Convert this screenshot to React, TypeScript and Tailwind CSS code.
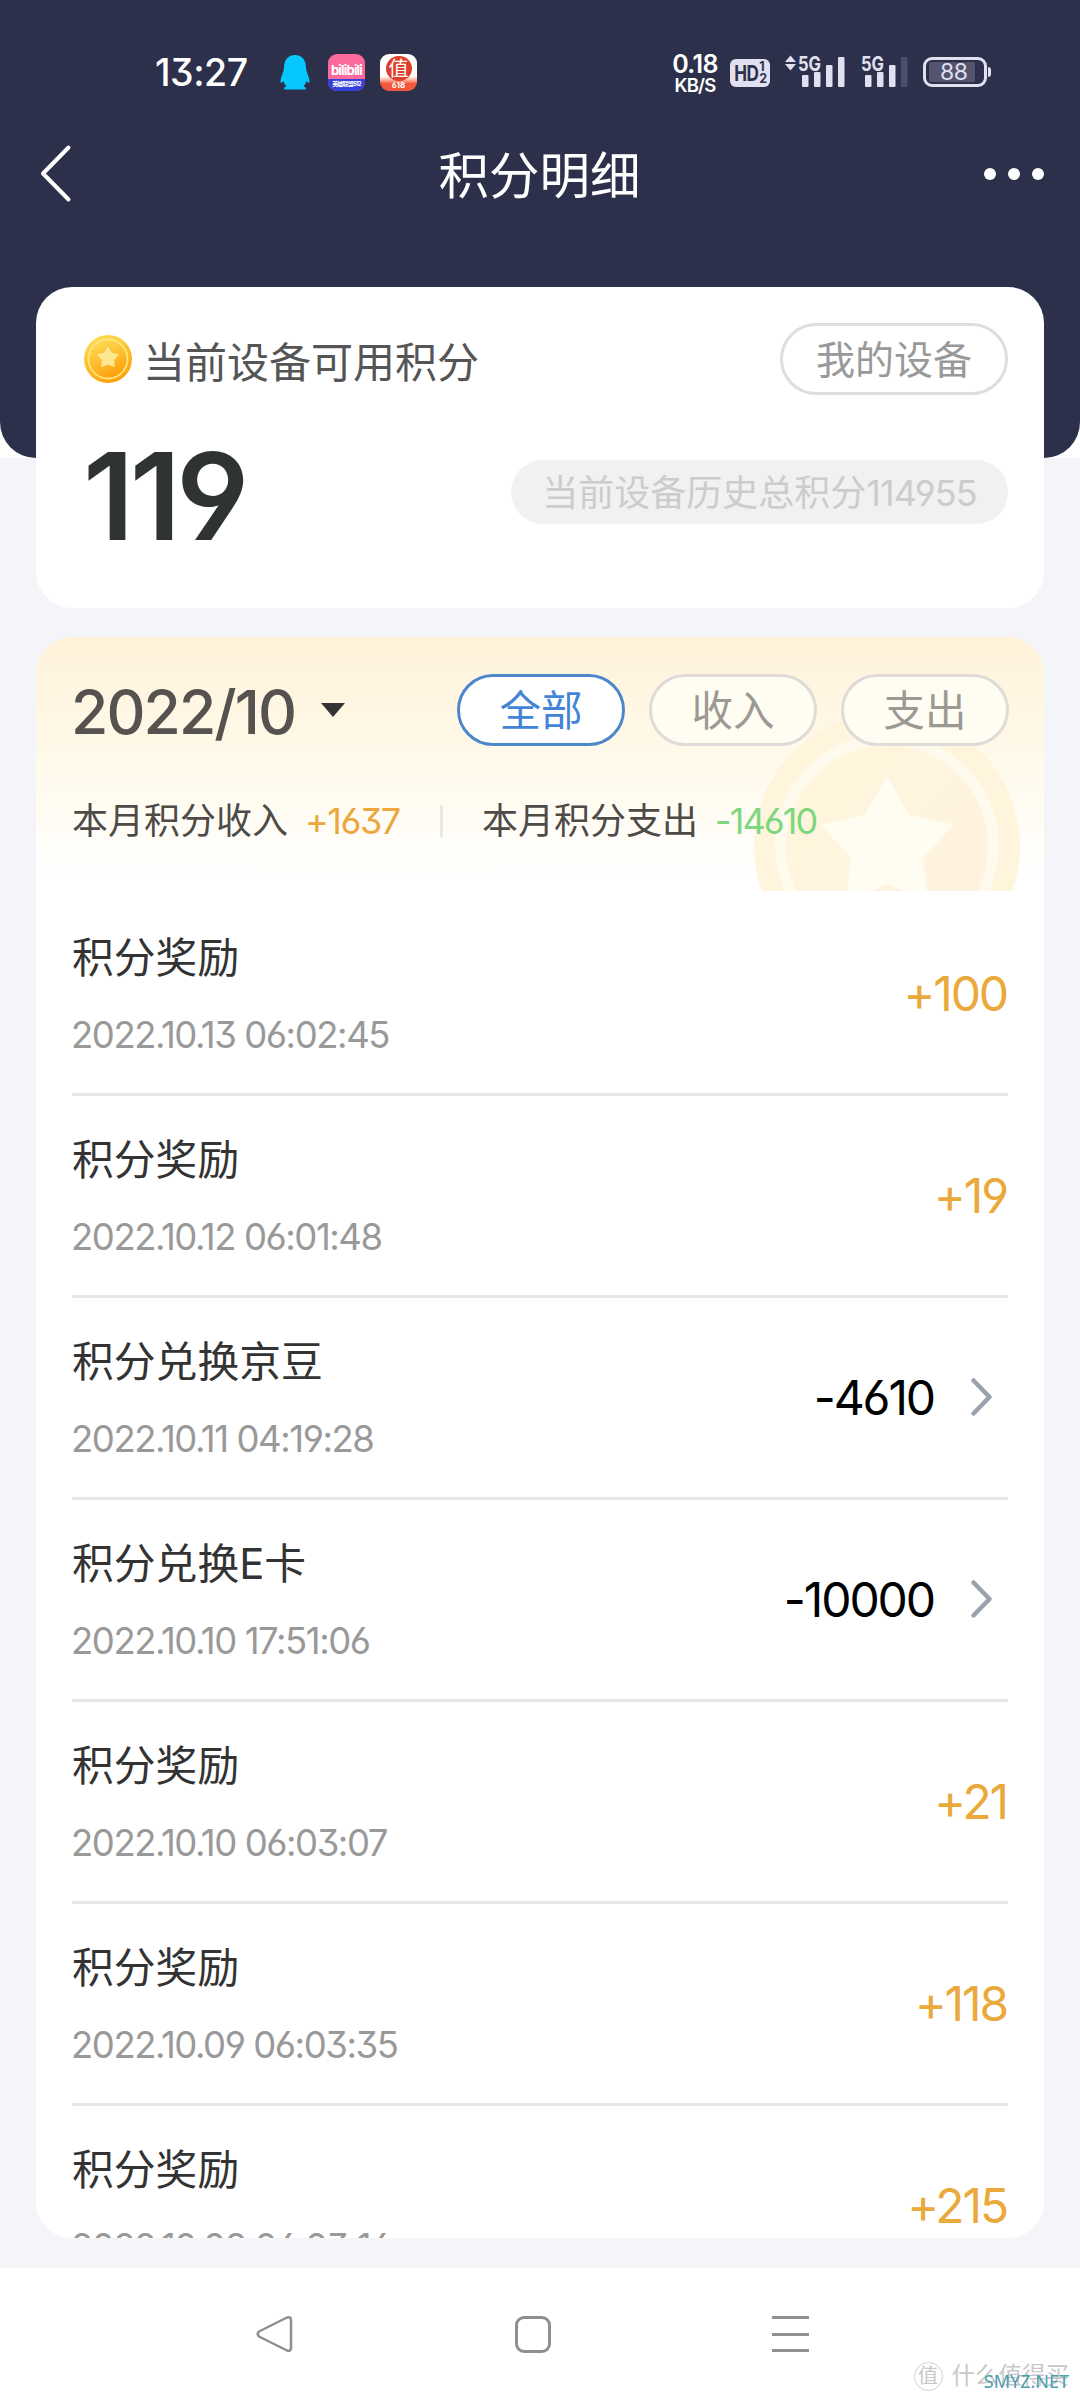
import React from "react";
import clsx from "clsx";

type PointRecord = {
  title: string;
  time: string;
  amount: string;
  link?: boolean;
};

const records: PointRecord[] = [
  { title: "积分奖励", time: "2022.10.13 06:02:45", amount: "+100" },
  { title: "积分奖励", time: "2022.10.12 06:01:48", amount: "+19" },
  { title: "积分兑换京豆", time: "2022.10.11 04:19:28", amount: "-4610", link: true },
  { title: "积分兑换E卡", time: "2022.10.10 17:51:06", amount: "-10000", link: true },
  { title: "积分奖励", time: "2022.10.10 06:03:07", amount: "+21" },
  { title: "积分奖励", time: "2022.10.09 06:03:35", amount: "+118" },
  { title: "积分奖励", time: "2022.10.08 06:03:16", amount: "+215" },
];

const tabs = ["全部", "收入", "支出"];

const starPath =
  "M0 -66 L21.2 -29.1 L62.8 -20.4 L34.2 11.1 L38.8 53.4 L0 36 L-38.8 53.4 L-34.2 11.1 L-62.8 -20.4 L-21.2 -29.1 Z";

const SignalBars: React.FC<{ weak?: boolean; data?: boolean }> = ({ weak, data }) => (
  <svg className="overflow-visible" width="62" height="34" viewBox="0 0 62 34" fill="#e0e0f0">
    {data && <path d="M6.5 0.5 L12 7 H1 Z M6.5 15.5 L12 9 H1 Z" />}
    <text
      x="14"
      y="15.5"
      fontSize="20.5"
      fontWeight="700"
      textLength="23"
      lengthAdjust="spacingAndGlyphs"
    >
      5G
    </text>
    <rect x="18" y="20" width="6.5" height="12" rx="1" />
    <rect x="30" y="17" width="6.5" height="15" rx="1" />
    <rect x="42" y="10" width="6.5" height="22" rx="1" />
    <rect x="54" y="2" width="6.5" height="30" rx="1" fill={weak ? "#4c4c6c" : "#e0e0f0"} />
  </svg>
);

const StatusBar = () => (
  <div className="flex h-[112px] items-start pt-[54px] pr-[89px] pl-[155px] text-white">
    <span className="w-[125px] text-[37.5px] leading-[38px] font-medium tracking-[-0.5px]">13:27</span>

    <svg width="30" height="36" viewBox="0 0 30 36" fill="#06c8ff">
      <path d="M15 1 C7.5 1 4 7 4 13.5 C4 18 1 22 0.5 26.5 C0.3 29.5 1.8 29.5 3.6 27 C4.2 29.5 5.2 31 6.6 32.2 C4 33 3.5 34.5 4.6 35.6 H25.4 C26.5 34.5 26 33 23.4 32.2 C24.8 31 25.8 29.5 26.4 27 C28.2 29.5 29.7 29.5 29.5 26.5 C29 22 26 18 26 13.5 C26 7 22.5 1 15 1 Z" />
    </svg>

    <div className="ml-[18px] flex h-[37px] w-[37px] flex-col items-center overflow-hidden rounded-[9px] bg-[#fb6a9d] font-bold">
      <span className="h-[25px] text-[13px] leading-[32px] tracking-[-0.8px]">bilibili</span>
      <span className="flex h-[12px] w-full justify-center bg-[#3440dc] text-[6px] leading-[10px] tracking-[-0.8px] whitespace-nowrap">
        英雄联盟S12
      </span>
    </div>

    <div className="ml-[15px] flex h-[37px] w-[37px] flex-col items-center overflow-hidden rounded-[9px] bg-linear-to-b from-white from-60% to-[#f0573c] to-80%">
      <span className="mt-[2px] flex h-[25px] w-[26px] shrink-0 items-center justify-center rounded-full bg-[#dd3f2b] text-[20px] leading-[24px]">
        值
      </span>
      <span className="text-[8px] leading-[9px] font-bold">618</span>
    </div>

    <div className="ml-auto flex h-[38px] w-[46px] flex-col items-center font-semibold">
      <span className="text-[25px] leading-[20px] tracking-[-0.6px]">0.18</span>
      <span className="mt-[3px] text-[18.5px] leading-[16px] tracking-[-0.8px]">KB/S</span>
    </div>

    <div className="mt-[5px] ml-[12px] flex h-[28px] w-[40px] items-center justify-center rounded-md bg-[#e0e0f0] font-bold text-[#2d304a]">
      <span className="-mx-[2px] scale-x-[0.78] text-[22px] leading-none tracking-[-1px]">HD</span>
      <span className="flex flex-col text-[12.5px] leading-[12px]">
        <span>1</span>
        <span>2</span>
      </span>
    </div>

    <div className="mt-px ml-[14px]">
      <SignalBars data />
    </div>
    <div className="mt-px ml-px">
      <SignalBars weak />
    </div>

    <div className="mt-[3px] ml-[14px] flex items-center">
      <div className="flex h-[30px] w-[64px] items-center rounded-[9px] border-3 border-[#e0e0f0] p-[3px]">
        <div className="h-[20px] w-[46px] rounded-[2px] bg-[#54546f] pl-[11px] text-[23px] leading-[21px] tracking-[-0.5px] text-[#e0e0f0]">
          88
        </div>
      </div>
      <div className="ml-px h-[10px] w-[3px] rounded-r bg-[#e0e0f0]" />
    </div>
  </div>
);

const TitleBar = () => (
  <div className="flex h-[123px] items-center justify-between pr-[36px] pl-[38px] text-white">
    <svg
      width="60"
      height="60"
      viewBox="0 0 60 60"
      fill="none"
      stroke="currentColor"
      strokeWidth="4"
      strokeLinecap="round"
      strokeLinejoin="round"
    >
      <path d="M30.500 3.500 L5 29.500 L30.500 55.500" />
    </svg>
    <h1 className="mt-[6px] mr-[3px] text-[50.5px] leading-none">积分明细</h1>
    <div className="flex w-[60px] justify-between">
      <span className="h-3 w-3 rounded-full bg-white" />
      <span className="h-3 w-3 rounded-full bg-white" />
      <span className="h-3 w-3 rounded-full bg-white" />
    </div>
  </div>
);

const Coin = () => (
  <svg width="50" height="50" viewBox="0 0 50 50">
    <defs>
      <linearGradient id="coin" x1="0.3" y1="0" x2="0.7" y2="1">
        <stop offset="0" stopColor="#fddc55" />
        <stop offset="1" stopColor="#ff9c08" />
      </linearGradient>
    </defs>
    <circle cx="25" cy="25" r="24" fill="url(#coin)" />
    <circle cx="25" cy="25" r="19.5" fill="url(#coin)" stroke="#ffe678" strokeWidth="1.8" />
    <path
      d={starPath}
      transform="translate(25 24) scale(0.155)"
      fill="#ffe793"
      stroke="#ffe793"
      strokeWidth="10"
      strokeLinejoin="round"
    />
  </svg>
);

const BalanceCard = () => (
  <section className="h-[321px] rounded-[36px] bg-white pt-9 pr-9 pl-[47px]">
    <div className="flex h-[72px] items-center">
      <Coin />
      <span className="mt-[7px] ml-[10px] text-[42px] leading-none text-[#555]">
        当前设备可用积分
      </span>
      <button className="ml-auto h-[72px] w-[228px] rounded-full border-3 border-[#dedede] text-[39px] leading-none text-[#999]">
        我的设备
      </button>
    </div>
    <div className="mt-[49px] flex items-center justify-between">
      <span className="text-[121px] leading-[104px] font-[570] tracking-[-4.5px] text-[#2f3433]">
        119
      </span>
      <span className="-mt-[8px] flex h-[64px] w-[497px] items-center justify-center rounded-full bg-[#f1f1f1] pt-[2px] text-[36px] text-[#ccc]">
        <span>当前设备历史总积分</span>
        <span className="tracking-[-0.9px]">114955</span>
      </span>
    </div>
  </section>
);

const CoinWatermark = () => (
  <svg
    className="absolute right-[22px] bottom-[3px]"
    width="270"
    height="178"
    viewBox="-135 -133 270 178"
  >
    <defs>
      <linearGradient id="mark" x1="0" y1="0" x2="1" y2="1">
        <stop offset="0" stopColor="#fff7dc" />
        <stop offset="1" stopColor="#fff1e0" />
      </linearGradient>
    </defs>
    <circle r="133" fill="#fff4dc" />
    <circle r="106.500" fill="url(#mark)" stroke="#fffaee" strokeWidth="11" />
    <path d={starPath} fill="#fffcf2" stroke="#fffcf2" strokeWidth="4" strokeLinejoin="round" />
  </svg>
);

const ListHeader = () => (
  <div className="relative h-[257px] bg-linear-to-b from-[#fff2da] via-[#fffaeb] to-white to-95% pt-[37px] pr-[35px] pl-9">
    <CoinWatermark />
    <div className="relative flex h-[72px] items-center">
      <span className="-ml-px mt-[5px] text-[60.5px] leading-none font-medium tracking-[-1.9px] text-[#555250]">
        2022/10
      </span>
      <svg className="ml-[26px]" width="24" height="14" viewBox="0 0 24 14">
        <path d="M0 0 H24 L12 14 Z" fill="#333" />
      </svg>
      <div className="ml-auto flex gap-6">
        {tabs.map((tab, idx) => (
          <button
            key={tab}
            className={clsx(
              "h-[72px] w-[168px] rounded-full border-3 pt-[3px] text-[41.5px] leading-none",
              idx === 0
                ? "border-[#4c88c9] bg-white text-[#4285d6]"
                : "border-[#dedbd8] bg-[#fffcf2] text-[#9c9892]"
            )}
          >
            {tab}
          </button>
        ))}
      </div>
    </div>
    <div className="relative mt-[50px] flex items-center text-[36px] leading-[50px] text-[#4d4a47]">
      <span className="w-[216px] shrink-0">本月积分收入</span>
      <span className="ml-[17px] w-[98px] tracking-[-1.5px] text-[#eda63a]">+1637</span>
      <span className="ml-[37px] h-[32px] w-[3px] bg-[#e8e8e8]" />
      <span className="ml-[39px]">本月积分支出</span>
      <span className="ml-[17px] tracking-[-1.9px] text-[#80d67f]">-14610</span>
    </div>
  </div>
);

const RecordRow: React.FC<{ record: PointRecord }> = ({ record }) => (
  <li className="mx-9 flex h-[202px] shrink-0 items-center border-b-3 border-[#e6e6e6]">
    <div className="flex h-full flex-col pt-[39px]">
      <span className="text-[41.8px] leading-[50px] text-[#333]">{record.title}</span>
      <span className="-ml-px mt-[29px] text-[36.5px] leading-[46px] font-[370] tracking-[-1.45px] text-[#999]">
        {record.time}
      </span>
    </div>
    <span
      className={clsx(
        "mt-px mr-px ml-auto text-[48px] leading-none font-[370] tracking-[-2.1px]",
        record.link ? "text-black" : "text-[#eaa93b]"
      )}
    >
      {record.amount}
    </span>
    {record.link && (
      <svg
        className="mr-[13px] ml-[34px]"
        width="26"
        height="42"
        viewBox="0 0 26 42"
        fill="none"
        stroke="#9aa2ae"
        strokeWidth="4.500"
        strokeLinecap="round"
        strokeLinejoin="round"
      >
        <path d="M4.500 3.500 L20.500 20 L4.500 36.500" />
      </svg>
    )}
  </li>
);

const NavBar = () => (
  <nav className="relative flex h-[132px] items-start bg-white pt-[47px]">
    <svg className="ml-[255px]" width="38" height="38" viewBox="0 0 38 38" fill="none" stroke="#8f8f8f" strokeWidth="2.500">
      <path d="M32 2.500 L4 16.500 Q1.500 19 4 21.500 L32 35.500 Q36 36.500 36 33 V5 Q36 1.500 32 2.500 Z" strokeLinejoin="round" />
    </svg>
    <span className="mt-px ml-[222px] h-[37px] w-[36px] rounded-[9px] border-3 border-[#8f8f8f]" />
    <div className="mt-px ml-[221px] flex h-[36px] w-[37px] flex-col justify-between">
      <span className="h-[3px] bg-[#8f8f8f]" />
      <span className="h-[3px] bg-[#8f8f8f]" />
      <span className="h-[3px] bg-[#8f8f8f]" />
    </div>

    {/* site stamp in the corner */}
    <div className="absolute right-[11px] bottom-[9px] flex items-center text-[#c8c8c8]">
      <span className="flex h-[29px] w-[29px] items-center justify-center rounded-full border border-[#d2d2d2] text-[20px] leading-none">
        值
      </span>
      <span className="ml-[9px] text-[23.5px] leading-[30px]">什么值得买</span>
    </div>
    <span className="absolute right-[11px] bottom-[8px] font-['Noto_Sans',sans-serif] text-[18px] leading-[22px] text-[#4c9dad]">
      SMYZ.NET
    </span>
  </nav>
);

export default function App() {
  return (
    <div className="flex h-[2400px] w-[1080px] flex-col overflow-hidden bg-[#f3f5f9] font-[Inter,'Noto_Sans_CJK_SC',sans-serif] [font-feature-settings:'cv03','cv04','cv09']">
      <div className="bg-white">
        <header className="h-[458px] rounded-b-[36px] bg-[#2d304a]">
          <StatusBar />
          <TitleBar />
        </header>
      </div>

      <main className="-mt-[171px] flex grow flex-col px-9">
        <BalanceCard />
        <section className="mt-[29px] h-[1601px] overflow-hidden rounded-[36px] bg-white">
          <ListHeader />
          <ul>
            {records.map((record) => (
              <RecordRow key={record.time} record={record} />
            ))}
          </ul>
        </section>
      </main>

      <NavBar />
    </div>
  );
}
